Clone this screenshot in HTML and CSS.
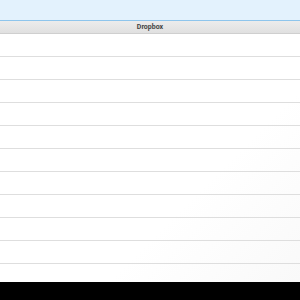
FILE: index.html
```html
<!DOCTYPE html>
<html lang="en">
<head>
  <meta charset="UTF-8"/>
  <title>Dropbox</title>
  <link rel="stylesheet" href="styles.css">
</head>
<body>
  <div class="top-bar"></div>
  <div class="title-bar">Dropbox</div>
  <ul class="file-list">
    <li></li><li></li><li></li><li></li><li></li>
    <li></li><li></li><li></li><li></li><li></li>
  </ul>
  <div class="bottom-bar"></div>
</body>
</html>
```

FILE: styles.css
```css
*, *::before, *::after { box-sizing: border-box; }

body {
  margin: 0; padding: 0;
  width: 300px; height: 300px;
  overflow: hidden;
  font-family: 'Roboto', 'Liberation Sans', sans-serif;
  background: #fff;
  display: flex; flex-direction: column;
}

.top-bar {
  height: 21px;
  background: #e3f2fd;
  border-bottom: 1px solid #8ec5ec;
}

.title-bar {
  height: 13px;
  background: linear-gradient(#ececec, #e0e0e0);
  border-bottom: 1px solid #cfcfcf;
  color: #444;
  font-size: 7px; font-weight: bold;
  line-height: 13px;
  text-align: center;
}

.file-list {
  list-style: none;
  margin: 0; padding: 0;
  flex: 1;
  background: linear-gradient(135deg, #fff 65%, #f9f9f9);
}
.file-list li {
  height: 23px;
  border-bottom: 1px solid #dedede;
}

.bottom-bar {
  height: 18px;
  background: #000;
}
```
